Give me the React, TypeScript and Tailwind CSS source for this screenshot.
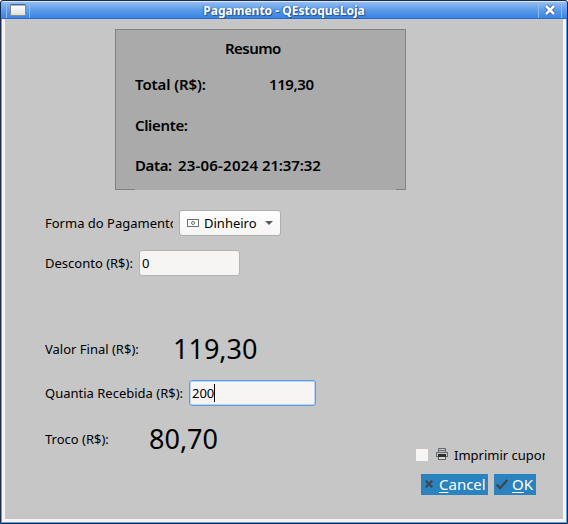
import React from "react";

function TitleBar() {
  return (
    <header className="flex h-[18px] shrink-0 items-stretch border-t border-[#dce8f8] border-b border-b-[#2a6cc8] bg-linear-to-b from-[#94bdf1] via-[#5b9be9] to-[#3884e4] px-[5px]">
      <div className="flex w-[24px] items-center justify-center border-x border-[#8fbaf0]">
        <svg width="16" height="12" viewBox="0 0 16 12" shapeRendering="crispEdges">
          <defs>
            <linearGradient id="win" x1="0" y1="0" x2="0" y2="1">
              <stop offset="0" stopColor="#ffffff" />
              <stop offset="1" stopColor="#dfe2da" />
            </linearGradient>
          </defs>
          <rect width="16" height="12" fill="#868b91" />
          <rect x="1" y="1" width="14" height="10" fill="url(#win)" />
          <rect x="1" y="0" width="14" height="1" fill="#4a68a0" />
          <rect x="1" y="1" width="14" height="1" fill="#a4b4cd" />
        </svg>
      </div>
      <h1 className="flex-1 text-center text-[12px] leading-[17px] font-bold whitespace-pre text-white [text-shadow:1px_1px_1px_#24508f,-1px_0_1px_#346eb8]">
        Pagamento - QEstoqueLoja
      </h1>
      <div className="flex w-[24px] items-center justify-center border-x border-[#8fbaf0]">
        <svg width="12" height="12" viewBox="0 0 12 12" fill="none">
          <path d="M2 2 L10 10 M10 2 L2 10" stroke="#3a5c8c" strokeWidth="4.4" />
          <path d="M2 2 L10 10 M10 2 L2 10" stroke="#fff" strokeWidth="2.6" />
        </svg>
      </div>
    </header>
  );
}

function Summary() {
  return (
    <section className="mt-[10px] ml-[110px] flex h-[161px] w-[291px] flex-col border border-b-0 border-[#828282] bg-[#aaaaaa] text-[15px] font-semibold">
      <h2 className="mt-[8px] ml-[109px] h-[20px] leading-[20px] tracking-[-0.55px]">Resumo</h2>
      <div className="mt-[16px] ml-[19px] flex h-[20px] leading-[20px] whitespace-nowrap">
        <span className="w-[134px] tracking-[-0.1px]">Total (R$):</span>
        <span className="tracking-[-0.4px]">119,30</span>
      </div>
      <div className="mt-[21px] ml-[19px] h-[20px] leading-[20px] tracking-[-0.35px]">Cliente:</div>
      <div className="mt-[20px] ml-[19px] flex h-[20px] leading-[20px] whitespace-nowrap">
        <span className="w-[43px] tracking-[-0.4px]">Data:</span>
        <span>
          <span className="tracking-[0.2px]">23-06-2024</span>
          <span className="tracking-[-0.15px]"> 21:37:32</span>
        </span>
      </div>
      <div className="mt-auto flex h-px justify-between">
        <span className="w-[19px] bg-[#828282]" />
        <span className="w-[9px] bg-[#828282]" />
      </div>
    </section>
  );
}

const label = "overflow-hidden whitespace-nowrap text-[13px]";
const field = "flex items-center rounded-[3px] border bg-[#f6f5f4] pl-[2px] text-[13px]";

export default function App() {
  return (
    <div className="flex h-[524px] w-[568px] flex-col overflow-hidden rounded-t-[3px] border border-[#182a50] bg-[#182a50] font-['Noto_Sans',sans-serif] text-black">
      <div className="flex flex-1 flex-col overflow-hidden rounded-t-[2px] bg-[#60a0f0] pb-px">
        <TitleBar />
        <div className="mx-px flex flex-1 bg-[#f6f5f4] px-[3px] pb-[3px]">
          <main className="flex flex-1 flex-col bg-[#c6c6c6]">
            <Summary />
            <div className="mt-[20px] ml-[40px] flex h-[26px] items-center">
              <span className={`${label} w-[128px] pt-[2px]`}>Forma do Pagamento:</span>
              <div className="ml-[6px] flex h-[26px] w-[102px] items-center rounded-[3px] border border-[#b0aeac] bg-linear-to-b from-white to-[#f6f5f4] pl-[7px] text-[13px]">
                <svg width="12" height="8" viewBox="0 0 12 8" fill="none" stroke="#6c6f72">
                  <rect x="0.5" y="0.5" width="11" height="7" />
                  <circle cx="6" cy="4" r="1.5" />
                </svg>
                <span className="ml-[5px] pt-[2px]">Dinheiro</span>
                <svg className="ml-[8px]" width="8" height="4" viewBox="0 0 8 4">
                  <path d="M0 0H8L4 4Z" fill="#5a5c5e" />
                </svg>
              </div>
            </div>
            <div className="mt-[14px] ml-[40px] flex h-[26px] items-center">
              <span className={`${label} w-[94px] pt-[2px]`}>Desconto (R$):</span>
              <div className={`${field} h-[26px] w-[101px] border-[#b6b4b2] pt-[2px]`}>0</div>
            </div>
            <div className="mt-[53px] ml-[40px] flex h-[40px] items-center">
              <span className={`${label} w-[128px] pt-[2px]`}>Valor Final (R$):</span>
              <span className="text-[27px] leading-[40px]">119,30</span>
            </div>
            <div className="mt-[11px] ml-[40px] flex h-[26px] items-center">
              <span className={`${label} w-[144px] pt-[2px]`}>Quantia Recebida (R$):</span>
              <div className={`${field} h-[26px] w-[127px] border-[#5e9ae6] inset-ring inset-ring-[#b9d3f3]`}>
                <span className="pt-[2px]">200</span>
                <span className="h-[18px] w-px bg-black" />
              </div>
            </div>
            <div className="mt-[13px] ml-[40px] flex h-[40px] items-center">
              <span className={`${label} w-[104px] pt-[2px]`}>Troco (R$):</span>
              <span className="text-[27px] leading-[40px]">80,70</span>
            </div>
            <div className="-mt-[14px] ml-[411px] flex h-[20px] items-center">
              <span className="-mt-px h-[12px] w-[12px] bg-[#f6f5f4]" />
              <svg className="-mt-[2px] ml-[8px]" width="12" height="12" viewBox="0 0 12 12" shapeRendering="crispEdges">
                <path d="M2 0h8v1H2zM2 0h1v4H2zM9 0h1v4H9zM3 2h6v1H3zM0 4h12v1H0zM0 4h1v5H0zM11 4h1v5h-1zM0 8h12v1H0z" fill="#6a6d70" />
                <rect x="2" y="6" width="8" height="3" fill="#2b2e31" />
                <path d="M2 9h8v3H2z" fill="#5b5e61" />
                <path d="M3 9h6v2H3z" fill="#d8d8d8" />
              </svg>
              <span className={`${label} ml-[6px] w-[91px] pt-[2px]`}>Imprimir cupom</span>
            </div>
            <div className="mt-[9px] ml-[416px] flex h-[21px] gap-[6px] text-[15px] leading-[21px] text-white">
              <button className="flex w-[67px] items-center bg-[#2a82be] pl-[4px]">
                <svg className="-mt-px" width="8" height="8" viewBox="0 0 8 8">
                  <path d="M0.7 0.7L7.3 7.3M7.3 0.7L0.7 7.3" stroke="#3f464c" strokeWidth="2.2" />
                </svg>
                <span className="ml-[6px]"><u className="underline-offset-2">C</u>ancel</span>
              </button>
              <button className="flex w-[42px] items-center bg-[#2a82be] pl-[2px]">
                <svg className="-mt-px" width="12" height="11" viewBox="0 0 12 11" fill="none">
                  <path d="M0.6 5.5L4 9L11.4 1" stroke="#3f464c" strokeWidth="2.3" />
                </svg>
                <span className="ml-[4px]"><u className="underline-offset-2">O</u>K</span>
              </button>
            </div>
          </main>
        </div>
      </div>
    </div>
  );
}
